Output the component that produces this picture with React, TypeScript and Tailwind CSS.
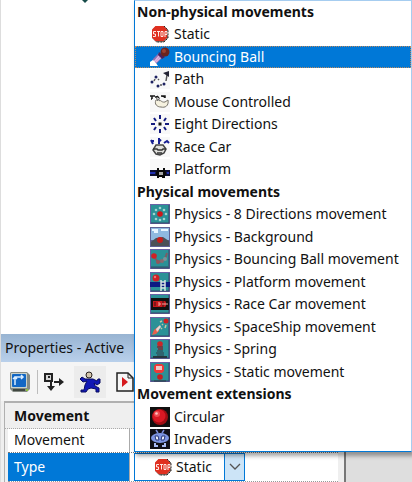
import React, { useState } from "react";

type IconName =
  | "stop" | "ball" | "path" | "mouse" | "eight" | "race" | "platform"
  | "pEight" | "pBackground" | "pBall" | "pPlatform" | "pRace" | "pShip" | "pSpring" | "pStatic"
  | "circular" | "invaders";

const Teal = () => (
  <>
    <rect width="20" height="20" fill="#6a62a6" />
    <rect x="1" y="1" width="18" height="18" fill="#2b9197" />
    <path d="M1 19H19V1" fill="none" stroke="#374766" />
  </>
);

const art: Record<IconName, React.ReactNode> = {
  stop: (
    <>
      <path d="M6 2h8l4 4v8l-4 4H6l-4-4V6z" fill="#8a7770" />
      <path d="M5.500 2h8L17 5.500v8L13.500 17h-8L2 13.500v-8z" fill="#e03020" />
      <path d="M14 2l4 4v8l-4 4H6" fill="none" stroke="#292421" strokeDasharray="2 1" />
      <path d="M6 7.500H3.500v2.500h2v2.500H3M7 7.500h3M8.500 7.500v5M11 7.500h2v5h-2zM15 13V7.500h2v3h-2" fill="none" stroke="#ffe9e4" strokeWidth="1" />
    </>
  ),
  ball: (
    <>
      <path d="M9 6L3 12l-1 4 4 1 8-8z" fill="#9272b6" />
      <path d="M10 8L4 15M12 9l-6 6" stroke="#e2b5df" strokeWidth="1.500" />
      <path d="M0 19v-4l3-2 3 3 2 3H0z" fill="#fff" />
      <path d="M9 5l6 5-3 2-4-4z" fill="#4b225b" />
      <circle cx="15" cy="5" r="4.500" fill="#6a241f" />
      <circle cx="14" cy="4" r="2" fill="#9b4233" />
    </>
  ),
  path: (
    <>
      <rect width="20" height="20" fill="#f8f8f8" />
      <g fill="#1c2160">
        <circle cx="2" cy="13" r="1.500" />
        <circle cx="6" cy="8" r="1.500" />
        <circle cx="8" cy="17" r="1.500" />
        <circle cx="14" cy="15" r="1.500" />
      </g>
      <path d="M4 12l1-2M8 10l1 1M10 16l2 0M16 12l1-6" stroke="#555" strokeWidth="1.500" />
      <path d="M13 4l6-2v6l-3-2z" fill="#232333" />
    </>
  ),
  mouse: (
    <>
      <rect width="20" height="20" fill="#f8f8f8" />
      <path d="M6 8c4-2 5 3 9 2l3-2c1 6-3 8-7 7-4 0-7-3-5-7z" fill="#f5f1df" stroke="#77736a" />
      <path d="M0 4h5M2 4v3M7 4l2 2M11 4h4v2M1 7h1M6 4v2" stroke="#171717" strokeWidth="1.500" />
      <path d="M6 6l4 3M10 6l-3 3" stroke="#777" />
    </>
  ),
  eight: (
    <>
      <rect width="20" height="20" fill="#f8f8f8" />
      <path d="M10 1v4M10 15v4M1 10h4M15 10h4M4 4l2 3M16 4l-2 3M4 16l2-3M16 16l-2-3" stroke="#141b80" strokeWidth="2" />
      <rect x="8.500" y="8.500" width="3" height="3" fill="#111" />
    </>
  ),
  race: (
    <>
      <rect width="20" height="20" fill="#f8f8f8" />
      <path d="M9 7V1M9 2l2 2M1 3l2 4M2 4h2M14 6l3-2 2 2" fill="none" stroke="#171f93" strokeWidth="2" />
      <path d="M6 8h7l3 4-2 4-4 2-4-1-3-4z" fill="#e0e0dc" stroke="#444" strokeWidth="1.500" />
      <path d="M3 12h4l1 1h4l1-1h3M7 16h5" fill="none" stroke="#333" strokeWidth="1.500" />
    </>
  ),
  platform: (
    <>
      <rect width="20" height="20" fill="#f8f8f8" />
      <rect y="11" width="20" height="6" fill="#0c0e30" />
      <path d="M0 14h6M14 14h5" stroke="#2230b0" strokeWidth="2" />
      <path d="M7 9h2v2h4V9h2v3l2 2-2 3v2h-3v-1H9v1H7v-2l-2-3 2-2z" fill="#080808" />
      <rect x="9" y="13" width="4" height="3" fill="#a8a8a8" />
    </>
  ),
  pEight: (
    <>
      <Teal />
      {[[10, 4], [14, 6], [16, 10], [14, 15], [10, 16], [6, 15], [4, 10], [6, 6]].map(([x, y]) => (
        <circle key={`${x}-${y}`} cx={x} cy={y} r="1.300" fill="#9fd3d0" />
      ))}
      <circle cx="10" cy="10" r="2.800" fill="#cd1818" />
    </>
  ),
  pBackground: (
    <>
      <rect width="20" height="20" fill="#5e6194" />
      <rect x="1" y="1" width="18" height="12" fill="#8fb9e0" />
      <path d="M2 3h6M11 3h7M4 5h4" stroke="#e8f5ff" strokeWidth="2" />
      <path d="M1 19v-4l5-4 7-1 6 4v5z" fill="#4b5158" />
      <circle cx="10" cy="13" r="3" fill="#c71c1b" />
    </>
  ),
  pBall: (
    <>
      <Teal />
      <path d="M5 9l3 4 4-1 3-2 2-6" fill="none" stroke="#7c5c66" strokeWidth="2" />
      <circle cx="4" cy="7" r="2.800" fill="#cf2024" />
      <circle cx="8" cy="13" r="2" fill="#95545a" />
      <circle cx="12" cy="12" r="2" fill="#8a6970" />
      <circle cx="15" cy="10" r="2" fill="#799298" />
      <path d="M1 18h17" stroke="#344d68" />
    </>
  ),
  pPlatform: (
    <>
      <Teal />
      <rect y="10" width="20" height="5" fill="#0c1a83" />
      <circle cx="6" cy="6" r="3.500" fill="#ce2025" />
      <circle cx="5" cy="5" r="1.200" fill="#ee7774" />
      <path d="M11 8v11M15 8v11M11 10h4M11 13h4M11 16h4" stroke="#d5e2e1" strokeWidth="1.500" />
    </>
  ),
  pRace: (
    <>
      <Teal />
      <rect x="1" y="4" width="18" height="12" fill="#111" />
      <path d="M3 7h12l1 1v4l-1 1H3z" fill="#c6191d" />
      <path d="M5 8v4M13 7v6" stroke="#6e1516" strokeWidth="1.500" />
      <path d="M8 9h2v2H8M12 10h6" fill="none" stroke="#f2aaa3" />
    </>
  ),
  pShip: (
    <>
      <Teal />
      <path d="M2 18l2-5 5-4v5l-3 3z" fill="#e9604b" />
      <path d="M6 12l4-4 1 2-4 5z" fill="#e4d7d3" />
      <circle cx="16" cy="4" r="2.500" fill="#ce2021" />
      <path d="M10 5l2-1M12 8l1-1M15 11l1-3M11 12l1-1" stroke="#c2c4a4" strokeWidth="1.500" />
    </>
  ),
  pSpring: (
    <>
      <Teal />
      <circle cx="10" cy="5" r="2.800" fill="#cc2627" />
      <path d="M7 8h6M8 10h5" stroke="#7c2c35" strokeWidth="1.500" />
      <path d="M7 12h6M6 14h8M7 16h7" fill="none" stroke="#343a48" strokeWidth="1.200" />
      <path d="M3 18h14" stroke="#27383f" strokeWidth="2" />
    </>
  ),
  pStatic: (
    <>
      <Teal />
      <path d="M6 2h6l2 2v5l-2 2H6L4 9V4z" fill="#ee3938" />
      <rect x="6" y="4" width="6" height="4" fill="#efc8c5" />
      <circle cx="10" cy="15" r="2.800" fill="#c51e1f" />
      <path d="M4 19h12" stroke="#263f45" />
    </>
  ),
  circular: (
    <>
      <rect width="20" height="20" fill="#101010" />
      <circle cx="10" cy="10" r="8" fill="#9e0d13" />
      <circle cx="9" cy="9" r="6.500" fill="#d81823" />
      <circle cx="7" cy="7" r="3" fill="#ec4b50" />
      <circle cx="6.500" cy="6.500" r="1.300" fill="#ffc4c2" />
    </>
  ),
  invaders: (
    <>
      <rect width="20" height="20" fill="#101018" />
      <path d="M6 1l2 3M14 1l-2 3" stroke="#7a8cd8" strokeWidth="1.500" />
      <ellipse cx="10" cy="9" rx="9" ry="5" fill="#7d95e2" />
      <path d="M5 7h3l1 4H6zM12 7h3l-1 4h-3z" fill="#f4f7ff" stroke="#253477" />
      <path d="M5 14v3h3M15 14v3h-3" fill="none" stroke="#a9bcf5" strokeWidth="2" />
    </>
  ),
};

function Icon({ name }: { name: IconName }) {
  return (
    <svg viewBox="0 0 20 20" className="size-5 shrink-0" aria-hidden="true">
      {art[name]}
    </svg>
  );
}

const groups: { title: string; items: { label: string; icon: IconName }[] }[] = [
  {
    title: "Non-physical movements",
    items: [
      { label: "Static", icon: "stop" },
      { label: "Bouncing Ball", icon: "ball" },
      { label: "Path", icon: "path" },
      { label: "Mouse Controlled", icon: "mouse" },
      { label: "Eight Directions", icon: "eight" },
      { label: "Race Car", icon: "race" },
      { label: "Platform", icon: "platform" },
    ],
  },
  {
    title: "Physical movements",
    items: [
      { label: "Physics - 8 Directions movement", icon: "pEight" },
      { label: "Physics - Background", icon: "pBackground" },
      { label: "Physics - Bouncing Ball movement", icon: "pBall" },
      { label: "Physics - Platform movement", icon: "pPlatform" },
      { label: "Physics - Race Car movement", icon: "pRace" },
      { label: "Physics - SpaceShip movement", icon: "pShip" },
      { label: "Physics - Spring", icon: "pSpring" },
      { label: "Physics - Static movement", icon: "pStatic" },
    ],
  },
  {
    title: "Movement extensions",
    items: [
      { label: "Circular", icon: "circular" },
      { label: "Invaders", icon: "invaders" },
    ],
  },
];

type Row = { label: string; icon?: IconName };
const rows: Row[] = groups.flatMap((g): Row[] => [{ label: g.title }, ...g.items]);

function MovementMenu() {
  const [active, setActive] = useState("Bouncing Ball");
  return (
    <ul
      aria-label="Movement types"
      className="absolute top-0 right-0 left-[133px] border border-t-[#a6cdf0] border-r-[#a6cdf0] border-b-[#0078d7] border-l-[#0078d7] bg-white shadow-[2px_4px_4px_rgba(0,0,0,0.35)]"
    >
      {rows.map((row) => (
        <li key={row.label} className="flex odd:h-[22px] even:h-[23px]">
          {row.icon ? (
            <button
              type="button"
              onClick={() => setActive(row.label)}
              className={
                row.label === active
                  ? "flex w-full items-center gap-1 border border-dotted border-[#b98a62] bg-[#0078d7] pb-px pl-3.5 text-left whitespace-nowrap text-white"
                  : "flex w-full items-center gap-1 border border-transparent pb-px pl-3.5 text-left whitespace-nowrap"
              }
            >
              <Icon name={row.icon} />
              {row.label}
            </button>
          ) : (
            <h2 className="flex items-center pb-px pl-0.5 font-bold whitespace-nowrap">{row.label}</h2>
          )}
        </li>
      ))}
    </ul>
  );
}

const toolButton = "flex h-8 w-8 items-center justify-center";

function Toolbar() {
  return (
    <div className="flex h-[39px] items-center bg-[#f5f5f5] pl-[3px]">
      <button type="button" aria-label="Display" className={toolButton}>
        <svg viewBox="0 0 20 20" className="size-5">
          <path d="M1 0h16l3 3v14l-3 3H3l-3-3V1z" fill="#858b85" />
          <path d="M1 1h16v15H1z" fill="#c9d1cb" />
          <rect x="2" y="2" width="14" height="13" rx="1" fill="#1267c4" />
          <path d="M5 13V5h8M3 7l2-2 2 2M11 3l2 2-2 2" fill="none" stroke="#d9edff" strokeWidth="1.500" />
          <path d="M3 18h12" stroke="#404740" strokeWidth="2" />
          <path d="M16 18h2" stroke="#8ac438" strokeWidth="2" />
        </svg>
      </button>
      <span className="ml-px h-6 w-px bg-[#bdbdbd]" />
      <button type="button" aria-label="Size and position" className={toolButton}>
        <svg viewBox="0 0 20 20" className="size-5" fill="none" stroke="#222" strokeWidth="2">
          <path d="M1 2h7v7H1z" fill="#d5d5d5" />
          <path d="M4 5h2M7 9v8M10 10h7" />
          <path d="M3 14h8l-4 5zM15 6v8l5-4z" fill="#222" stroke="none" />
        </svg>
      </button>
      <button type="button" aria-label="Movement" className="ml-1 flex h-8 w-8 items-center justify-center bg-[#ececec]">
        <svg viewBox="0 0 22 22" className="size-[22px]">
          <path d="M1 8l2-2 3 2h8l4 2 1-2h2v4l-3 2-3-2 1 3 4 2v4h-3v-3l-5-1-3 1-2 3H2v-2h3l1-5 2-4-4 1z" fill="#1118b5" stroke="#080c61" />
          <circle cx="10" cy="4" r="3" fill="#d5c7ad" stroke="#29221f" />
        </svg>
      </button>
      <button type="button" aria-label="Events" className="ml-1 flex h-8 w-8 items-center justify-center">
        <svg viewBox="0 0 20 20" className="size-5">
          <path d="M1 1h11l5 5v13H1z" fill="#f6f6f6" stroke="#222" strokeWidth="1.500" />
          <path d="M12 1v5h5" fill="none" stroke="#222" />
          <path d="M6 5l6 5-6 5z" fill="#d61a1e" />
        </svg>
      </button>
    </div>
  );
}

export default function App() {
  return (
    <main className="relative flex flex-col overflow-hidden border-l border-[#dddddd] bg-white font-['Noto_Sans',sans-serif] text-sm leading-5 text-[#111]">
      <div className="h-[334px] pl-[81px]">
        <svg viewBox="0 0 6 3" className="h-[3px] w-1.5" aria-hidden="true">
          <path d="M0 0h6L3 3z" fill="#164b49" />
        </svg>
      </div>
      <div className="flex">
        <section aria-label="Properties" className="w-[345px] shrink-0 border-r-2 border-[#777] bg-[#efefef]">
          <h1 className="flex h-7 items-center bg-linear-to-b from-[#98b4d2] to-[#b9d0eb] pl-1">Properties - Active</h1>
          <Toolbar />
          <div className="mr-1.5 ml-[3px] border-t-2 border-l border-[#b0b0b0] pt-0.5">
            <h2 className="flex h-6 items-center border-b border-dotted border-[#aaa] pb-px pl-[9px] font-bold">Movement</h2>
            <div className="ml-[3px] flex h-6 items-center border-b border-dotted border-[#777] bg-white">
              <span className="flex h-full w-[122px] items-center border-r border-[#aaa] pb-px pl-1.5">Movement</span>
            </div>
            <div className="ml-[3px] flex h-[29px] border-b border-dotted border-[#999] bg-white">
              <label htmlFor="type" className="flex w-[122px] items-center border-r border-[#aaa] bg-[#0078d7] pl-1.5 text-white">Type</label>
              <div className="ml-1 flex w-[111px] items-center border border-[#0078d7] bg-white pl-[18px]">
                <Icon name="stop" />
                <select id="type" defaultValue="Static" className="ml-[3px] min-w-0 flex-1 appearance-none bg-white">
                  <option>Static</option>
                </select>
                <button type="button" aria-label="Open movement types" className="flex h-full w-5 shrink-0 items-center justify-center border-l border-[#0078d7] bg-[#cce4f7]">
                  <svg viewBox="0 0 12 8" className="h-2 w-3" fill="none" stroke="#555" strokeWidth="1.300">
                    <path d="M1 1l5 5 5-5" />
                  </svg>
                </button>
              </div>
            </div>
          </div>
        </section>
        <div className="flex-1 bg-[#dedede]" />
      </div>
      <MovementMenu />
    </main>
  );
}
